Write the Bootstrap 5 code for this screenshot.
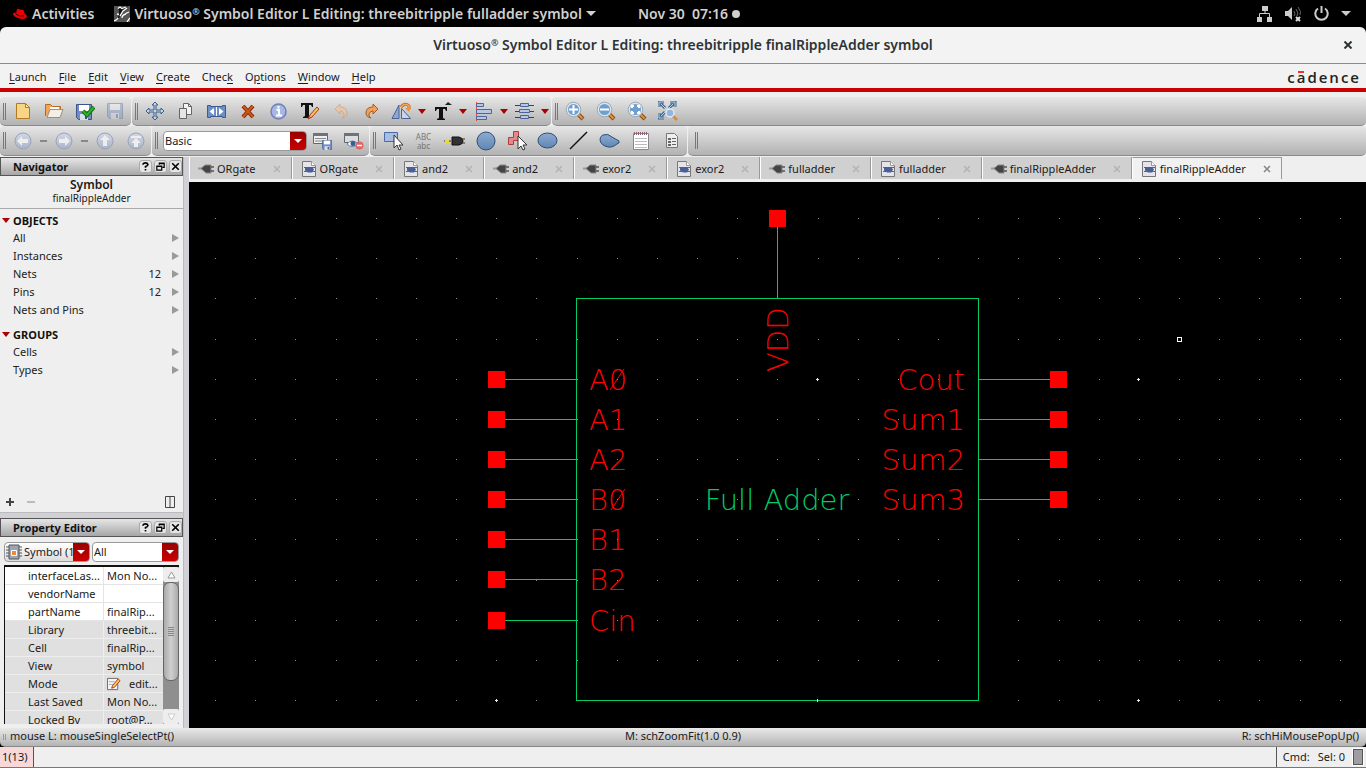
<!DOCTYPE html>
<html lang="en">
<head>
<meta charset="utf-8">
<meta name="viewport" content="width=device-width, initial-scale=1">
<title>Virtuoso Symbol Editor</title>
<link rel="stylesheet" href="https://cdn.jsdelivr.net/npm/bootstrap@5.3.0/dist/css/bootstrap.min.css">
<style>
body{font:11px/18px "Noto Sans","Open Sans",sans-serif;color:#1a1a1a;background:#000;overflow:hidden}
svg{display:block;flex:none}
a{color:inherit;text-decoration:none}
sup{font-size:9px;top:-4px}
.top-bar{height:27px;background:#000;color:#d0d0d0;font:600 14px/27px "Noto Sans",sans-serif;display:grid;grid-template-columns:1fr auto 1fr}
.hat{margin-left:12px}
.app-mark{margin-left:20px}
.clock{padding-left:12px}
.status-icons{gap:12px;padding-right:15px}
.title-bar{height:37px;background:#f3f3f3;border-bottom:1px solid #8c8c84;border-radius:6px 6px 0 0;font:600 14px/36px "Noto Sans",sans-serif;color:#2e3436}
.title-bar .btn{margin-right:14px}
.btn{--bs-btn-padding-x:0;--bs-btn-padding-y:0;--bs-btn-border-width:0;--bs-btn-border-radius:2px;font-size:11px;line-height:1;display:flex;align-items:center;justify-content:center}
.menu-bar{height:24px;background:#f2f2f2;padding:2px 7px 0 9px}
.menu-bar .nav-link{padding:0;color:#1a1a1a;line-height:22px}
.menu-bar .nav{gap:12px}
u{text-underline-offset:2px}
.brand-word{font:600 15px/22px "Open Sans",sans-serif;letter-spacing:2px;color:#222;margin-right:-2px}
.brand-word span{position:relative}
.brand-word span::after{content:"";position:absolute;left:1px;top:4px;width:6px;height:2px;background:#e33}
.red-rule{height:4px;background:#c00}
.tools{background:#efefef;padding:5px 0 1px}
.tool-row{height:29px}
.tool-row.second{height:30px}
.tool-group{background:linear-gradient(#e6e6e6,#b2b2b2);border-bottom:1px solid #8a8a8a;border-radius:4px 4px 5px 5px;margin-right:1px}
.tool-group .btn{width:31px;height:26px}
.tool-group .btn.narrow{width:29px}
.tool-group .btn.drop{width:12px}
.tool-group .btn.dash{width:10px}
.abc{font-size:8px;line-height:9px;color:#777}
.grip{width:7px;height:17px;flex:none;background:repeating-linear-gradient(90deg,transparent 0 1px,#777 1px 2px) no-repeat 2px 0/6px 17px}
.grip.short{height:6px;margin:6px 3px 0 0;opacity:.6}
.caret-red{width:0;height:0;border:4px solid transparent;border-top:5px solid #a00;border-bottom:0}
.combo{display:flex;align-items:center;background:#fff;border:1px solid #999;border-radius:4px;overflow:hidden;height:20px}
.combo.space{width:144px}
.combo.object{width:86px;background:linear-gradient(#fff,#ddd)}
.combo .form-select{flex:1 1 0;min-width:0;border:0;border-radius:0;background:none;padding:0 0 0 1px;font-size:11px;line-height:18px;height:18px;color:#1a1a1a;text-overflow:clip}
.combo-arrow{flex:none;width:16px;height:100%;background:linear-gradient(#900,#c00);display:flex;align-items:center;justify-content:center}
.combo-arrow::after{content:"";border:4px solid transparent;border-top-color:#fff;border-bottom:0}
.left-dock{width:183px;flex:none;background:#efefef}
.splitter{width:6px;flex:none;background:#d0d0d6;border-left:1px solid #bbb}
.split-h{height:6px;background:#d0d0d6;border-top:1px solid #bbb}
.dock-title{height:19px;border:1px solid #555;background:linear-gradient(#e6e6e6,#a6a6a6);font-weight:700;padding-left:12px;color:#111;line-height:17px}
.dock-title .btn{width:13px;height:13px;background:#e6e6e6;border:1px solid #aaa;border-radius:3px;margin-right:2px;color:#000}
.nav-head{height:33px;border-bottom:1px solid #aaa;text-align:center;padding-top:2px;line-height:13px;font-size:10px}
.nav-head strong{display:block;font-size:12px;line-height:14px;font-weight:600}
.tree{padding-top:3px}
.tree .list-group-item{border:0;background:none;padding:0 4px 0 13px;height:18px;color:#222}
.tree .num{width:30px;text-align:right;margin-right:11px}
.tri-r{border:4px solid transparent;border-left:7px solid #999;border-right:0}
.sect{font-weight:700;height:17px;padding-left:2px;gap:3px;color:#111}
.list-group+.sect{margin-top:7px}
.combos{padding:5px 4px 0;gap:2px}
.props{margin:3px 4px 4px 4px;height:159px;border-left:1px solid #111;border-top:2px solid #111;background:#8f8f8f}
.props .table{--bs-table-bg:transparent;table-layout:fixed;border-collapse:separate;border-spacing:0;font-size:11px;color:#1a1a1a}
.props th,.props td{height:18px;line-height:17px;padding:0;font-weight:400;border-bottom:1px solid #e4e4e4;white-space:nowrap;overflow:hidden;background:#fff}
.props th{width:99px;padding-left:23px;border-right:1px solid #e4e4e4}
.props td{padding-left:3px}
.props .ro th,.props .ro td{background:#e0e0e0;border-color:#eee}
.sbar{width:16px;flex:none}
.sbar .btn{width:16px;height:15px;background:#ededed;color:#aaa}
.sthumb{height:99px;border:1px solid #666;border-radius:7px;background:linear-gradient(90deg,#aaa,#d0d0d0,#aaa)}
.editor-tabs{--bs-nav-tabs-border-width:0;height:25px;background:#efefef;padding-bottom:3px;flex-wrap:nowrap}
.editor-tabs .nav-item{display:flex;align-items:center;height:22px;background:#d0d0d0;border-left:1px solid #fff;border-right:1px solid #999;padding:2px 10px 0 8px}
.editor-tabs .nav-item.on{background:#f1f1f1;border-top:1px solid #999;padding-top:0}
.editor-tabs .nav-link{padding:0;margin:0;border:0;color:#1a1a1a;display:flex;align-items:center;gap:3px;background:none;line-height:18px}
.editor-tabs .btn{margin-left:17px;color:#b4b4b4}
.editor-tabs .on .btn{color:#888}
.sheet{background:#000;min-width:0}
.wires{stroke:#00cc66;fill:none;shape-rendering:crispEdges}
.pins{fill:#f00;shape-rendering:crispEdges}
.labels{font:200 29px "DejaVu Sans","DejaVu Sans Light",sans-serif;fill:#f00}
.hint{height:19px;background:linear-gradient(#e9e9e9,#b4b4b4);border-bottom:1px solid #888;border-radius:0 0 5px 5px;display:grid;grid-template-columns:1fr auto 1fr;line-height:16px}
.hint span:last-child{padding-right:7px}
.foot{height:21px;background:#efefef;border-bottom:1px solid #777}
.count{background:#f8d8d8;border-right:1px solid #555;width:34px;padding-left:2px;line-height:20px}
.cmd{border-left:1px solid #555;padding-left:6px;line-height:20px}
.meter{width:10px;height:16px;margin:2px 3px 0 0;background:#9d9da3;border:1px solid #555;box-shadow:0 0 0 1px #fff}
</style>
</head>
<body class="vh-100 d-flex flex-column">
<svg width="0" height="0" class="position-absolute" aria-hidden="true">
<defs>
<symbol id="plug" viewBox="0 0 16 14"><path d="M0 6.500h5" stroke="#999" stroke-width="2"/><path d="M3 6.500L7 3h6v8H8z" fill="#444" stroke="#888"/><path d="M13 5h3M13 9h3" stroke="#555" stroke-width="1.500"/></symbol>
<symbol id="sheetico" viewBox="0 0 16 16"><path d="M1.500.5h9l4 4v11h-13z" fill="#e4e4ea" stroke="#777"/><path d="M10.500.5v4h4" fill="#fff" stroke="#999"/><path d="M3 6.500h3M3 10.500h3M11 6.500h3M11 10.500h3" stroke="#d33"/><path d="M4 6h7l2 2.500-2 3H7L4 9.500z" fill="#4a5f96"/></symbol>
<symbol id="floppy" viewBox="0 0 16 16"><path d="M.5.5h15v15h-13l-2-2z" fill="#6f8cc4" stroke="#3d5288"/><path d="M3 1h10v6H3z" fill="#fff"/><path d="M4 10h8v6H4z" fill="#d9dfea"/><path d="M9 11h2v4H9z" fill="#3d5288"/></symbol>
<symbol id="lens" viewBox="0 0 20 20"><path d="M12 12l6 6" stroke="#8a4a10" stroke-width="4"/><path d="M12.500 12.500l5 5" stroke="#e8942e" stroke-width="2"/><circle cx="8.500" cy="8.500" r="7.300" fill="#dfe6ea" stroke="#9aa8b2"/><circle cx="8.500" cy="8.500" r="5.500" fill="#6f9fd0"/></symbol>
<symbol id="help" viewBox="0 0 11 11"><path d="M2.500 3.500V2.500Q3 1 5.500 1t3 2q0 1.500-3 2.500v1.500M5.500 8.500v2" fill="none" stroke="#000" stroke-width="2"/></symbol>
<symbol id="restore" viewBox="0 0 11 11"><path d="M4 3.500V1.500h6v5H8M1 5h6v5H1zM1 5.500h6M4 2h6" fill="none" stroke="#000" stroke-width="1.500"/></symbol>
<symbol id="shut" viewBox="0 0 11 11"><path d="M1.500 1.500l8 8m0-8l-8 8" stroke="#000" stroke-width="2"/></symbol>
<symbol id="tabx" viewBox="0 0 8 8"><path d="M1 1l6 6m0-6l-6 6" stroke="currentColor" stroke-width="1.600"/></symbol>
<linearGradient id="ball" x2="0" y2="1"><stop stop-color="#d3d8e3"/><stop offset="1" stop-color="#aab4c8"/></linearGradient>
<linearGradient id="blue" x2="0" y2="1"><stop stop-color="#8eabd0"/><stop offset="1" stop-color="#5f86b4"/></linearGradient>
</defs>
</svg>

<header class="top-bar flex-shrink-0">
  <div class="d-flex align-items-center text-nowrap">
    <svg class="hat" width="16" height="12" viewBox="0 0 17 13"><path d="M4 7L5 2Q6 0 8 1.500L12 2Q13 3 13.500 6Q17 8 15.500 10.500Q12 13 7 11Q0 9 1 6Q2 5 4 5z" fill="#e00"/><path d="M4 6.500Q7 9.500 13 8.500" stroke="#000" fill="none"/></svg>
    <a href="#" class="ps-1">Activities</a>
    <svg class="app-mark" width="16" height="16" viewBox="0 0 16 16"><path d="M0 0h16v16H0z" fill="#555"/><path d="M5 4l-1-1 2-2 3 1 5-2-4 5-3 3-2 4h-1l1-5z" fill="#111"/><path d="M4 2.500L6 1l2 1.500L12 1M13 2L9 5 6 10M3 8l2 .5M12 8Q8 9 8 12M15 6q-3 1-5 3M0 15q3-1 4-3M13 16l3-4" stroke="#fff" stroke-width="1.300" fill="none"/></svg>
    <span class="ps-1 ms-px">Virtuoso<sup>®</sup> Symbol Editor L Editing: threebitripple fulladder symbol</span>
    <svg class="ms-1" width="10" height="6" viewBox="0 0 10 6"><path d="M0 0h10L5 5z" fill="#d0d0d0"/></svg>
  </div>
  <div class="clock d-flex align-items-center">Nov 30&nbsp; 07:16<svg class="ms-1" width="8" height="8" viewBox="0 0 8 8"><circle cx="4" cy="4" r="4" fill="#d0d0d0"/></svg></div>
  <div class="status-icons d-flex align-items-center justify-content-end">
    <svg width="16" height="16" viewBox="0 0 16 16"><path d="M5 0h6v5H5zM0 11h5v5H0zM10 11h5v5h-5z" fill="#ccc"/><path d="M8 5v3M2.500 11V7.500h10V11" stroke="#ccc" fill="none"/></svg>
    <svg width="17" height="16" viewBox="0 0 17 16"><path d="M0 5h3l4-4v13l-4-4H0z" fill="#ccc"/><path d="M9 5q2 3 0 5M11 3q3 4 1 7M13 1q4 5 2 8" stroke="#666" fill="none"/><path d="M11 11l4 4m0-4l-4 4" stroke="#ddd" stroke-width="2"/></svg>
    <svg width="15" height="15" viewBox="0 0 15 15"><path d="M4 2.500A6.200 6.200 0 1 0 11 2.500M7.500 0v7" stroke="#ccc" stroke-width="2" fill="none"/></svg>
    <svg width="10" height="6" viewBox="0 0 10 6"><path d="M0 0h10L5 5z" fill="#ccc"/></svg>
  </div>
</header>

<div class="title-bar flex-shrink-0 text-center position-relative">Virtuoso<sup>®</sup> Symbol Editor L Editing: threebitripple finalRippleAdder symbol
  <button class="btn position-absolute end-0 top-0 h-100 text-dark" aria-label="Close"><svg width="8" height="8"><path d="M.5.5l7 7m0-7l-7 7" stroke="#2e3436" stroke-width="2"/></svg></button>
</div>

<nav class="menu-bar d-flex justify-content-between flex-shrink-0">
  <div class="nav">
    <a class="nav-link" href="#"><u>L</u>aunch</a><a class="nav-link" href="#"><u>F</u>ile</a><a class="nav-link" href="#"><u>E</u>dit</a><a class="nav-link" href="#"><u>V</u>iew</a><a class="nav-link" href="#"><u>C</u>reate</a><a class="nav-link" href="#">Chec<u>k</u></a><a class="nav-link" href="#">O<u>p</u>tions</a><a class="nav-link" href="#"><u>W</u>indow</a><a class="nav-link" href="#"><u>H</u>elp</a>
  </div>
  <div class="brand-word">c<span>a</span>dence</div>
</nav>
<div class="red-rule flex-shrink-0"></div>

<div class="tools flex-shrink-0">
  <div class="tool-row d-flex">
    <div class="tool-group d-flex align-items-center"><span class="grip"></span>
      <button class="btn" aria-label="New"><svg width="16" height="18" viewBox="0 0 16 18"><path d="M1.500 1.500h9l4 4v11h-13z" fill="#f7d486" stroke="#b07a20"/><path d="M10.500 1.500v4h4z" fill="#fff3cf" stroke="#b07a20"/></svg></button>
      <button class="btn" aria-label="Open"><svg width="20" height="18" viewBox="0 0 20 18"><path d="M1.500 14V2.500h5l2 2h8V8" fill="#f3a552" stroke="#b8691b"/><path d="M6 5h9v4H6z" fill="#fff"/><path d="M3 15.500L6 7.500h13l-3 8z" fill="#f4efe6" stroke="#a08e78"/></svg></button>
      <button class="btn" aria-label="Check and save"><svg width="20" height="18" viewBox="0 0 20 18"><use href="#floppy" x="1" y="2" width="16" height="16"/><path d="M8 9l4 4 7-8" stroke="#176b17" stroke-width="4" fill="none"/><path d="M8 9l4 4 7-8" stroke="#25b825" stroke-width="2" fill="none"/></svg></button>
      <button class="btn" aria-label="Save"><svg width="17" height="17" opacity=".35"><use href="#floppy" width="16" height="16"/></svg></button>
    </div>
    <div class="tool-group d-flex align-items-center"><span class="grip"></span>
      <button class="btn" aria-label="Move"><svg width="20" height="20" viewBox="0 0 20 20"><path d="M10 1l3 3h-2v5h5V7l3 3-3 3v-2h-5v5h2l-3 3-3-3h2v-5H4v2l-3-3 3-3v2h5V4H7z" fill="#c4d4e8" stroke="#3c5f8a"/></svg></button>
      <button class="btn" aria-label="Copy"><svg width="15" height="17" viewBox="0 0 15 17"><path d="M5.500.500h5l3 3v8h-8z" fill="#f4f4f4" stroke="#666"/><path d="M1.500 5.500h7v10h-7z" fill="#e6e6e6" stroke="#666"/><path d="M10.500.500v3h3" fill="none" stroke="#666"/></svg></button>
      <button class="btn" aria-label="Stretch"><svg width="19" height="15" viewBox="0 0 19 15"><path d="M.5 1.500h3v1h12v-1h3v12h-3v-1h-12v1h-3z" fill="#6d8fc8" stroke="#3c5a90"/><path d="M7 4L2.500 7.500 7 11zM12 4l4.500 3.500L12 11z" fill="#fff"/><path d="M9.500 3v9" stroke="#fff"/></svg></button>
      <button class="btn" aria-label="Delete"><svg width="14" height="15" viewBox="0 0 14 15"><path d="M2 2l10 11M12 2L2 13" stroke="#7c2808" stroke-width="4"/><path d="M2 2l10 11M12 2L2 13" stroke="#d45515" stroke-width="2"/></svg></button>
      <button class="btn" aria-label="Information"><svg width="17" height="17" viewBox="0 0 17 17"><circle cx="8.500" cy="8.500" r="7.500" fill="#a8b8e6" stroke="#7180b4" stroke-width="1.500"/><path d="M6.500 7h2.500v5M6 12.500h6M8.500 3v2.500" stroke="#fff" stroke-width="2" fill="none"/></svg></button>
      <button class="btn" aria-label="Edit text"><svg width="20" height="20" viewBox="0 0 20 20"><path d="M1 2h12v4h-1L11 4H9v11l2 1v1H3v-1l2-1V4H3L2 6H1z" fill="#111"/><path d="M8 18l2-4 7-8 2 2-7 8z" fill="#f2c84a" stroke="#a33"/></svg></button>
      <button class="btn" aria-label="Undo" disabled><svg width="14" height="16" viewBox="0 0 14 16"><path d="M1 6l5-5v3q7 0 7 6 0 4-5 5 3-2 2-4-1-3-4-3v3z" fill="#f2c29a" stroke="#d49a6c"/></svg></button>
      <button class="btn" aria-label="Redo"><svg width="14" height="16" viewBox="0 0 14 16"><path d="M13 6L8 1v3Q1 4 1 10q0 4 5 5-3-2-2-4 1-3 4-3v3z" fill="#f0a05c" stroke="#a85c20"/></svg></button>
      <button class="btn narrow" aria-label="Rotate"><svg width="21" height="18" viewBox="0 0 21 18"><path d="M1 16.500h7V3z" fill="#8fa6d2" stroke="#4a6296"/><path d="M10.500 6.500l9 10h-9z" fill="#c9d5ea" stroke="#4a6296"/><path d="M10 5Q14 0 18 4v3" fill="none" stroke="#b8621c" stroke-width="3"/><path d="M10 5Q14 0 18 4v3" fill="none" stroke="#f5a860" stroke-width="1.500"/><path d="M14 6h6l-2 4z" fill="#e8924a"/></svg></button><button class="btn drop" aria-label="Rotate options"><i class="caret-red"></i></button>
      <button class="btn narrow" aria-label="Text style"><svg width="18" height="18" viewBox="0 0 18 18"><path d="M1 5h12v4h-1l-1-2H9v9l2 1v1H3v-1l2-1V7H3L2 9H1z" fill="#111"/><path d="M11 3l3-3 4 3z" fill="#222"/></svg></button><button class="btn drop" aria-label="Text options"><i class="caret-red"></i></button>
      <button class="btn narrow" aria-label="Align"><svg width="17" height="19" viewBox="0 0 17 19"><path d="M1.500 0v19" stroke="#e44"/><path d="M1.500 1.500h7v3h-7zM1.500 7.500h15v4h-15zM1.500 14.500h10v3h-10z" fill="#b6c7e5" stroke="#4b669b"/></svg></button><button class="btn drop" aria-label="Align options"><i class="caret-red"></i></button>
      <button class="btn narrow" aria-label="Distribute"><svg width="19" height="18" viewBox="0 0 19 18"><path d="M0 3.500h19M0 9.500h19M0 15.500h19" stroke="#345"/><path d="M5.500 1.500h8v3h-8zM4.500 7.500h10v3h-10zM5.500 13.500h8v3h-8z" fill="#b6c7e5" stroke="#4b669b"/></svg></button><button class="btn drop" aria-label="Distribute options"><i class="caret-red"></i></button>
    </div>
    <div class="tool-group d-flex align-items-center flex-fill me-0"><span class="grip"></span>
      <button class="btn" aria-label="Zoom in"><svg width="20" height="20" viewBox="0 0 20 20"><use href="#lens"/><path d="M4 8.500h9M8.500 4v9" stroke="#fff" stroke-width="2"/></svg></button>
      <button class="btn" aria-label="Zoom out"><svg width="20" height="20" viewBox="0 0 20 20"><use href="#lens"/><path d="M4 8.500h9" stroke="#fff" stroke-width="2"/></svg></button>
      <button class="btn" aria-label="Zoom to selection"><svg width="20" height="20" viewBox="0 0 20 20"><use href="#lens"/><path d="M5 7V5h2M10 5h2v2M12 10v2h-2M7 12H5v-2" stroke="#fff" stroke-width="2" fill="none"/></svg></button>
      <button class="btn" aria-label="Zoom to fit"><svg width="20" height="20" viewBox="0 0 20 20"><path d="M1 6V1h5M12 1h5v5M1 12v5h5M3 3l4 4M15 3l-4 4M3 15l4-4" stroke="#45698f" fill="none" stroke-width="3"/><path d="M1 6V1h5M12 1h5v5M1 12v5h5M3 3l4 4M15 3l-4 4M3 15l4-4" stroke="#b8d0e6" fill="none"/><path d="M15 15l4 4" stroke="#d68a3a" stroke-width="2.500"/><circle cx="12" cy="12" r="4" fill="#8fb6e0" stroke="#e4eaf0" stroke-width="1.500"/></svg></button>
    </div>
  </div>
  <div class="tool-row second d-flex">
    <div class="tool-group d-flex align-items-center"><span class="grip"></span>
      <button class="btn" aria-label="Back"><svg width="18" height="18" viewBox="0 0 18 18"><circle cx="9" cy="9" r="8" fill="url(#ball)" stroke="#99a4ba"/><path d="M3 9l5-5v3h6v4H8v3z" fill="#eee"/></svg></button><button class="btn dash" aria-label="Back history"><svg width="7" height="2"><path d="M0 0h7v2H0z" fill="#888"/></svg></button>
      <button class="btn" aria-label="Forward"><svg width="18" height="18" viewBox="0 0 18 18"><circle cx="9" cy="9" r="8" fill="url(#ball)" stroke="#99a4ba"/><path d="M15 9l-5-5v3H4v4h6v3z" fill="#eee"/></svg></button><button class="btn dash" aria-label="Forward history"><svg width="7" height="2"><path d="M0 0h7v2H0z" fill="#888"/></svg></button>
      <button class="btn" aria-label="Up"><svg width="18" height="18" viewBox="0 0 18 18"><circle cx="9" cy="9" r="8" fill="url(#ball)" stroke="#99a4ba"/><path d="M9 3l5 5h-3v6H7V8H4z" fill="#eee"/></svg></button>
      <button class="btn" aria-label="Top"><svg width="18" height="18" viewBox="0 0 18 18"><circle cx="9" cy="9" r="8" fill="url(#ball)" stroke="#99a4ba"/><path d="M4 4h10v2H4zM9 6l5 5h-3v4H7v-4H4z" fill="#eee"/></svg></button>
    </div>
    <div class="tool-group d-flex align-items-center"><span class="grip"></span>
      <label class="combo space ms-1"><select class="form-select" aria-label="Workspace"><option>Basic</option></select><span class="combo-arrow"></span></label>
      <button class="btn" aria-label="Save workspace"><svg width="20" height="18" viewBox="0 0 20 18"><path d="M.5 1.500h14v10H.5z" fill="#eee" stroke="#666"/><path d="M0 1h15v3H0z" fill="#6a7480"/><path d="M2 6.500h11M2 9h7" stroke="#888"/><use href="#floppy" x="9" y="8" width="10" height="10"/></svg></button>
      <button class="btn" aria-label="Delete workspace"><svg width="20" height="18" viewBox="0 0 20 18"><path d="M.5 1.500h14v9H.5z" fill="#ddd" stroke="#666"/><path d="M0 1h15v3H0z" fill="#6a7480"/><path d="M3 12q5-6 11 0-6 5-11 0" fill="#fff" stroke="#5a7ba8"/><circle cx="9" cy="11.500" r="2.500" fill="#335f96"/><circle cx="15.500" cy="13.500" r="4" fill="#d66"/><path d="M13 13.500h5" stroke="#fff" stroke-width="1.500"/></svg></button>
    </div>
    <div class="tool-group d-flex align-items-center"><span class="grip"></span>
      <button class="btn" aria-label="Select"><svg width="20" height="20" viewBox="0 0 20 20"><path d="M1.500 1.500h13v9h-13z" fill="#a7bde2" stroke="#4b6aa5"/><path d="M11 4v13l3-3 2 5 2-1-2-4h4z" fill="#fff" stroke="#333"/></svg></button>
      <button class="btn" aria-label="Label"><span class="abc">ABC<br>abc</span></button>
      <button class="btn" aria-label="Pin"><svg width="21" height="12" viewBox="0 0 21 12"><path d="M0 6h7" stroke="#333"/><path d="M1 4h4v4H1z" fill="#e8dc30"/><path d="M8 2h7q4 1 4 4t-4 4H8z" fill="#333" stroke="#111"/><path d="M18 4h3M18 8h3" stroke="#333"/></svg></button>
      <button class="btn" aria-label="Circle"><svg width="20" height="20" viewBox="0 0 20 20"><circle cx="10" cy="10" r="9" fill="url(#blue)" stroke="#2f4d73"/></svg></button>
      <button class="btn" aria-label="Selection box"><svg width="20" height="20" viewBox="0 0 20 20"><path d="M6.500.5h5v9h-5v4h-5v-7h5z" fill="#e08a8a" stroke="#b03c3c"/><path d="M11 5v13l3-3 2 4 2-1-2-4h4z" fill="#fff" stroke="#333"/></svg></button>
      <button class="btn" aria-label="Ellipse"><svg width="21" height="17" viewBox="0 0 21 17"><ellipse cx="10.500" cy="8.500" rx="9.500" ry="7.500" fill="url(#blue)" stroke="#2f4d73"/></svg></button>
      <button class="btn" aria-label="Line"><svg width="19" height="19"><path d="M1 18L18 1" stroke="#111" stroke-width="1.500"/></svg></button>
      <button class="btn" aria-label="Arc"><svg width="21" height="16" viewBox="0 0 21 16"><path d="M1.500 9Q0 4 4 2q5-2 9 2l7 4q1 2-2 3-6 5-12 2-3-1-4.500-4z" fill="url(#blue)" stroke="#2f4d73"/></svg></button>
      <button class="btn" aria-label="Note"><svg width="16" height="20" viewBox="0 0 16 20"><path d="M.5 2.500h15v16H.5z" fill="#fff" stroke="#888"/><path d="M2 7.500h12M2 10.500h12M2 13.500h12M2 16.500h12" stroke="#bbb"/><path d="M1 2.500h14" stroke="#867" stroke-width="3" stroke-dasharray="1 1"/></svg></button>
      <button class="btn" aria-label="Properties"><svg width="12" height="15" viewBox="0 0 12 15"><path d="M.5.5h8l3 3v11H.5z" fill="#eee" stroke="#777"/><path d="M2 5h3v2H2zM2 8h3v2H2zM2 11h3v2H2zM6 5h4v1H6zM6 8h4v1H6zM6 11h4v1H6z" fill="#666"/></svg></button>
    </div>
    <div class="tool-group d-flex align-items-center flex-fill me-0 ps-1"><span class="grip"></span></div>
  </div>
</div>

<main class="d-flex flex-fill overflow-hidden">
  <aside class="left-dock d-flex flex-column">
    <div class="dock-title d-flex align-items-center flex-shrink-0"><span class="flex-fill">Navigator</span><button class="btn" aria-label="Help"><svg width="9" height="9"><use href="#help"/></svg></button><button class="btn" aria-label="Float"><svg width="9" height="9"><use href="#restore"/></svg></button><button class="btn me-0" aria-label="Close"><svg width="9" height="9"><use href="#shut"/></svg></button></div>
    <div class="nav-head flex-shrink-0"><strong>Symbol</strong>finalRippleAdder</div>
    <section class="tree flex-fill overflow-hidden">
      <div class="sect d-flex align-items-center"><i class="caret-red"></i>OBJECTS</div>
      <div class="list-group list-group-flush">
        <a href="#" class="list-group-item d-flex align-items-center"><span class="flex-fill">All</span><i class="tri-r"></i></a>
        <a href="#" class="list-group-item d-flex align-items-center"><span class="flex-fill">Instances</span><i class="tri-r"></i></a>
        <a href="#" class="list-group-item d-flex align-items-center"><span class="flex-fill">Nets</span><span class="num">12</span><i class="tri-r"></i></a>
        <a href="#" class="list-group-item d-flex align-items-center"><span class="flex-fill">Pins</span><span class="num">12</span><i class="tri-r"></i></a>
        <a href="#" class="list-group-item d-flex align-items-center"><span class="flex-fill">Nets and Pins</span><i class="tri-r"></i></a>
      </div>
      <div class="sect d-flex align-items-center"><i class="caret-red"></i>GROUPS</div>
      <div class="list-group list-group-flush">
        <a href="#" class="list-group-item d-flex align-items-center"><span class="flex-fill">Cells</span><i class="tri-r"></i></a>
        <a href="#" class="list-group-item d-flex align-items-center"><span class="flex-fill">Types</span><i class="tri-r"></i></a>
      </div>
    </section>
    <div class="d-flex align-items-center px-1 pb-1 gap-2 flex-shrink-0">
      <button class="btn" aria-label="Add"><svg width="12" height="12"><path d="M2 6h8M6 2v8" stroke="#444" stroke-width="2"/></svg></button>
      <button class="btn" aria-label="Remove"><svg width="14" height="12"><path d="M3 6h8" stroke="#bbb" stroke-width="2"/></svg></button>
      <button class="btn ms-auto me-1" aria-label="Columns"><svg width="11" height="13"><path d="M1.500 1.500h9v11h-9zM6 1v11" fill="none" stroke="#444"/></svg></button>
    </div>
    <div class="split-h flex-shrink-0"></div>
    <div class="dock-title d-flex align-items-center flex-shrink-0"><span class="flex-fill">Property Editor</span><button class="btn" aria-label="Help"><svg width="9" height="9"><use href="#help"/></svg></button><button class="btn" aria-label="Float"><svg width="9" height="9"><use href="#restore"/></svg></button><button class="btn me-0" aria-label="Close"><svg width="9" height="9"><use href="#shut"/></svg></button></div>
    <div class="combos d-flex flex-shrink-0">
      <label class="combo object"><svg width="18" height="16" viewBox="0 0 18 16"><path d="M1 3h16M1 6h16M1 9h16M1 12h16" stroke="#555"/><path d="M4 1h10v14H4z" fill="#9aa4b4" stroke="#555"/><path d="M6.500 6.500h5v5h-5z" fill="#f08a30" stroke="#fff"/></svg><select class="form-select" aria-label="Object"><option>Symbol (1)</option></select><span class="combo-arrow"></span></label>
      <label class="combo flex-fill"><select class="form-select" aria-label="Filter"><option>All</option></select><span class="combo-arrow"></span></label>
    </div>
    <div class="props d-flex flex-shrink-0 overflow-hidden">
      <div class="flex-fill overflow-hidden">
        <table class="table mb-0">
          <tr><th>interfaceLas...</th><td>Mon No...</td></tr><tr><th>vendorName</th><td></td></tr><tr><th>partName</th><td>finalRip...</td></tr>
          <tr class="ro"><th>Library</th><td>threebit...</td></tr><tr class="ro"><th>Cell</th><td>finalRip...</td></tr><tr class="ro"><th>View</th><td>symbol</td></tr>
          <tr class="ro"><th>Mode</th><td><div class="d-flex align-items-center gap-2"><svg width="14" height="14" viewBox="0 0 15 15"><path d="M.5 1.500h11v12H.5z" fill="#f4f4f4" stroke="#666"/><path d="M2 5h6M2 8h5" stroke="#aaa"/><path d="M5 12l1-3 6-7 2 2-6 7z" fill="#f4cb44" stroke="#a33"/></svg>edit...</div></td></tr>
          <tr class="ro"><th>Last Saved</th><td>Mon No...</td></tr><tr class="ro"><th>Locked By</th><td>root@P...</td></tr>
        </table>
      </div>
      <div class="sbar d-flex flex-column"><button class="btn" aria-label="Scroll up"><svg width="9" height="8"><path d="M1 7l3.500-6L8 7z" fill="#fff" stroke="#999"/></svg></button>
        <div class="sthumb d-flex align-items-center justify-content-center"><svg width="6" height="9"><path d="M0 .5h6M0 2.500h6M0 4.500h6M0 6.500h6M0 8.500h6" stroke="#888"/></svg></div>
        <button class="btn mt-auto" aria-label="Scroll down"><svg width="9" height="8"><path d="M1 1l3.500 6L8 1z" fill="#fff" stroke="#ccc"/></svg></button></div>
    </div>
  </aside>
  <div class="splitter"></div>
  <section class="d-flex flex-column flex-fill overflow-hidden">
    <ul class="nav nav-tabs editor-tabs flex-shrink-0">
      <li class="nav-item"><a class="nav-link" href="#"><svg width="16" height="14"><use href="#plug"/></svg>ORgate</a><button class="btn" aria-label="Close tab"><svg width="8" height="8"><use href="#tabx"/></svg></button></li>
      <li class="nav-item"><a class="nav-link" href="#"><svg width="16" height="16"><use href="#sheetico"/></svg>ORgate</a><button class="btn" aria-label="Close tab"><svg width="8" height="8"><use href="#tabx"/></svg></button></li>
      <li class="nav-item"><a class="nav-link" href="#"><svg width="16" height="16"><use href="#sheetico"/></svg>and2</a><button class="btn" aria-label="Close tab"><svg width="8" height="8"><use href="#tabx"/></svg></button></li>
      <li class="nav-item"><a class="nav-link" href="#"><svg width="16" height="14"><use href="#plug"/></svg>and2</a><button class="btn" aria-label="Close tab"><svg width="8" height="8"><use href="#tabx"/></svg></button></li>
      <li class="nav-item"><a class="nav-link" href="#"><svg width="16" height="14"><use href="#plug"/></svg>exor2</a><button class="btn" aria-label="Close tab"><svg width="8" height="8"><use href="#tabx"/></svg></button></li>
      <li class="nav-item"><a class="nav-link" href="#"><svg width="16" height="16"><use href="#sheetico"/></svg>exor2</a><button class="btn" aria-label="Close tab"><svg width="8" height="8"><use href="#tabx"/></svg></button></li>
      <li class="nav-item"><a class="nav-link" href="#"><svg width="16" height="14"><use href="#plug"/></svg>fulladder</a><button class="btn" aria-label="Close tab"><svg width="8" height="8"><use href="#tabx"/></svg></button></li>
      <li class="nav-item"><a class="nav-link" href="#"><svg width="16" height="16"><use href="#sheetico"/></svg>fulladder</a><button class="btn" aria-label="Close tab"><svg width="8" height="8"><use href="#tabx"/></svg></button></li>
      <li class="nav-item"><a class="nav-link" href="#"><svg width="16" height="14"><use href="#plug"/></svg>finalRippleAdder</a><button class="btn" aria-label="Close tab"><svg width="8" height="8"><use href="#tabx"/></svg></button></li>
      <li class="nav-item on"><a class="nav-link" href="#"><svg width="16" height="16"><use href="#sheetico"/></svg>finalRippleAdder</a><button class="btn" aria-label="Close tab"><svg width="8" height="8"><use href="#tabx"/></svg></button></li>
    </ul>
    <div class="sheet flex-fill overflow-hidden position-relative">
      <svg class="position-absolute" width="100%" height="100%" role="img" aria-label="Full Adder symbol">
        <g class="labels">
          <text x="400" y="208">A0</text><text x="400" y="248">A1</text><text x="400" y="288">A2</text><text x="400" y="328">B0</text><text x="400" y="368">B1</text><text x="400" y="408">B2</text><text x="400" y="449">Cin</text>
          <g text-anchor="end"><text x="776" y="208">Cout</text><text x="776" y="248">Sum1</text><text x="776" y="288">Sum2</text><text x="776" y="328">Sum3</text></g>
          <text x="588" y="328" text-anchor="middle" fill="#00cc66">Full Adder</text>
          <text transform="translate(599 190) rotate(-90)">VDD</text>
        </g>
        <path d="M421 208l14-21M422 328l14-21" stroke="#f00"/>
        <g id="dots" fill="#8a8a9a" shape-rendering="crispEdges"></g>
        <path class="wires" d="M387.500 116.500h402v402h-402zM588.500 45v71M316 197.500h71M316 237.500h71M316 277.500h71M316 317.500h71M316 357.500h71M316 397.500h71M316 438.500h71M790 197.500h71M790 237.500h71M790 277.500h71M790 317.500h71"/>
        <path class="pins" d="M580 28h17v17h-17zM299 189h17v17h-17zM299 229h17v17h-17zM299 269h17v17h-17zM299 309h17v17h-17zM299 349h17v17h-17zM299 389h17v17h-17zM299 430h17v17h-17zM861 189h17v17h-17zM861 229h17v17h-17zM861 269h17v17h-17zM861 309h17v17h-17z"/>
        <path d="M627 197.500h3M628.500 196v3M948 197.500h3M949.500 196v3M306 518.500h3M307.500 517v3M628.500 517v3M948 518.500h3M949.500 517v3" stroke="#e8e8f0" shape-rendering="crispEdges"/>
        <path d="M988.500 155.500h4v4h-4z" fill="#000" stroke="#fff" shape-rendering="crispEdges"/>
      </svg>
    </div>
  </section>
</main>

<div class="hint flex-shrink-0"><span class="d-flex align-items-start"><i class="grip short"></i>mouse L: mouseSingleSelectPt()</span><span>M: schZoomFit(1.0 0.9)</span><span class="text-end">R: schHiMousePopUp()</span></div>
<footer class="foot d-flex flex-shrink-0"><span class="count">1(13)</span><span class="cmd ms-auto">Cmd:</span><span class="ps-2 pe-2 cmd border-0">Sel: 0</span><span class="meter"></span></footer>

<script src="https://cdn.jsdelivr.net/npm/bootstrap@5.3.0/dist/js/bootstrap.bundle.min.js"></script>
<script>
// Background grid: 24 intervals span 964 pixels, each dot snapped to a whole pixel.
const dots = document.getElementById('dots');
for (let r = 0; r < 40; r++) for (let c = 0; c < 80; c++) {
  const p = document.createElementNS('http://www.w3.org/2000/svg', 'rect');
  p.setAttribute('x', Math.round(26 + c * 964 / 24)); p.setAttribute('y', Math.round(36 + r * 964 / 24));
  p.setAttribute('width', 1); p.setAttribute('height', 1);
  dots.append(p);
}
</script>
</body>
</html>
